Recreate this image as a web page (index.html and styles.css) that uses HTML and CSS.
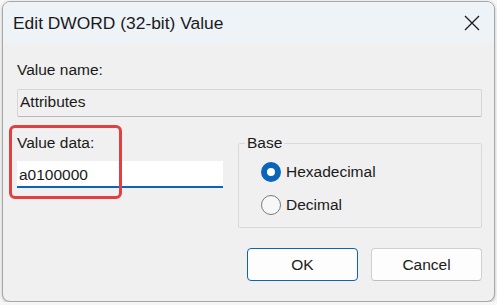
FILE: index.html
```html
<!DOCTYPE html>
<html>
<head>
<meta charset="utf-8">
<link rel="stylesheet" href="styles.css">
</head>
<body>
<div class="window">
  <div class="titlebar">
    <span class="title">Edit DWORD (32-bit) Value</span>
    <span class="close">
      <svg width="16" height="16" viewBox="0 0 16 16"><path d="M1 1 L15 15 M15 1 L1 15" stroke="#1b1b1b" stroke-width="1.3" fill="none"/></svg>
    </span>
  </div>
  <div class="content">
    <div class="label">Value name:</div>
    <div class="field readonly">Attributes</div>
    <div class="row">
      <div class="left">
        <div class="label">Value data:</div>
        <div class="field input">a0100000</div>
        <div class="highlight"></div>
      </div>
      <fieldset class="base">
        <legend>Base</legend>
        <div class="radio"><span class="dot checked"></span><span>Hexadecimal</span></div>
        <div class="radio"><span class="dot"></span><span>Decimal</span></div>
      </fieldset>
    </div>
    <div class="buttons">
      <div class="btn primary">OK</div>
      <div class="btn">Cancel</div>
    </div>
  </div>
</div>
</body>
</html>
```
FILE: styles.css
```css
html, body {
  margin: 0;
  padding: 0;
}
body {
  background: #f6f6f6;
  font-family: "Liberation Sans", Arial, sans-serif;
  font-size: 15.5px;
  line-height: 18px;
  color: #1a1a1a;
}
.window {
  box-sizing: border-box;
  margin: 1px 0 0 2px;
  width: 493px;
  height: 301px;
  border: 1px solid #a8a8a8;
  border-radius: 8px;
  background: #f0f0f0;
  overflow: hidden;
  box-shadow: 0 1px 3px rgba(0,0,0,0.25);
}
.titlebar {
  height: 41px;
  background: #eef3f8;
  display: flex;
  align-items: center;
  justify-content: space-between;
  padding: 0 14px 0 10px;
}
.title {
  font-size: 17.4px;
  color: #1a1a1a;
  padding-top: 1px;
}
.close {
  display: flex;
  width: 16px;
  height: 16px;
  margin-top: 1px;
}
.content {
  padding: 18px 12px 0 14px;
}
.field {
  box-sizing: border-box;
  height: 28px;
  padding: 3px 0 0 2px;
}
.readonly {
  margin-top: 10px;
  border: 1px solid #d6d6d6;
  border-bottom-color: #b8b8b8;
  border-radius: 2px;
  background: #f0f0f0;
}
.row {
  display: grid;
  grid-template-columns: 206px 1fr;
  column-gap: 15px;
  margin-top: 17px;
}
.left {
  position: relative;
}
.input {
  margin-top: 9px;
  height: 27px;
  background: #ffffff;
  border-bottom: 2px solid #0a64b8;
  padding-top: 5px;
}
.highlight {
  position: absolute;
  left: -8px;
  top: -9px;
  width: 107px;
  height: 68px;
  border: 3px solid #e0403f;
  border-radius: 6px;
}
.base {
  margin: 0;
  padding: 3px 0 6px 0;
  border: 1px solid #d9d9d9;
  border-radius: 2px;
  min-width: 0;
}
.base legend {
  margin-left: 6px;
  padding: 0 2px;
  line-height: 18px;
}
.radio {
  display: flex;
  align-items: center;
  height: 33px;
  padding-left: 22px;
}
.dot {
  box-sizing: border-box;
  width: 20px;
  height: 20px;
  border-radius: 50%;
  border: 1px solid #7a7a7a;
  background: #f7f7f7;
  margin-right: 5px;
  flex: none;
}
.dot.checked {
  border: 6px solid #0a64b8;
  background: #ffffff;
}
.buttons {
  display: flex;
  justify-content: flex-end;
  gap: 13px;
  margin-top: 20px;
}
.btn {
  box-sizing: border-box;
  width: 111px;
  height: 33px;
  border: 1px solid #d0d0d0;
  border-bottom-color: #bcbcbc;
  border-radius: 4px;
  background: #fdfdfd;
  display: flex;
  align-items: center;
  justify-content: center;
}
.btn.primary {
  border: 1px solid #0a64b8;
}
```
